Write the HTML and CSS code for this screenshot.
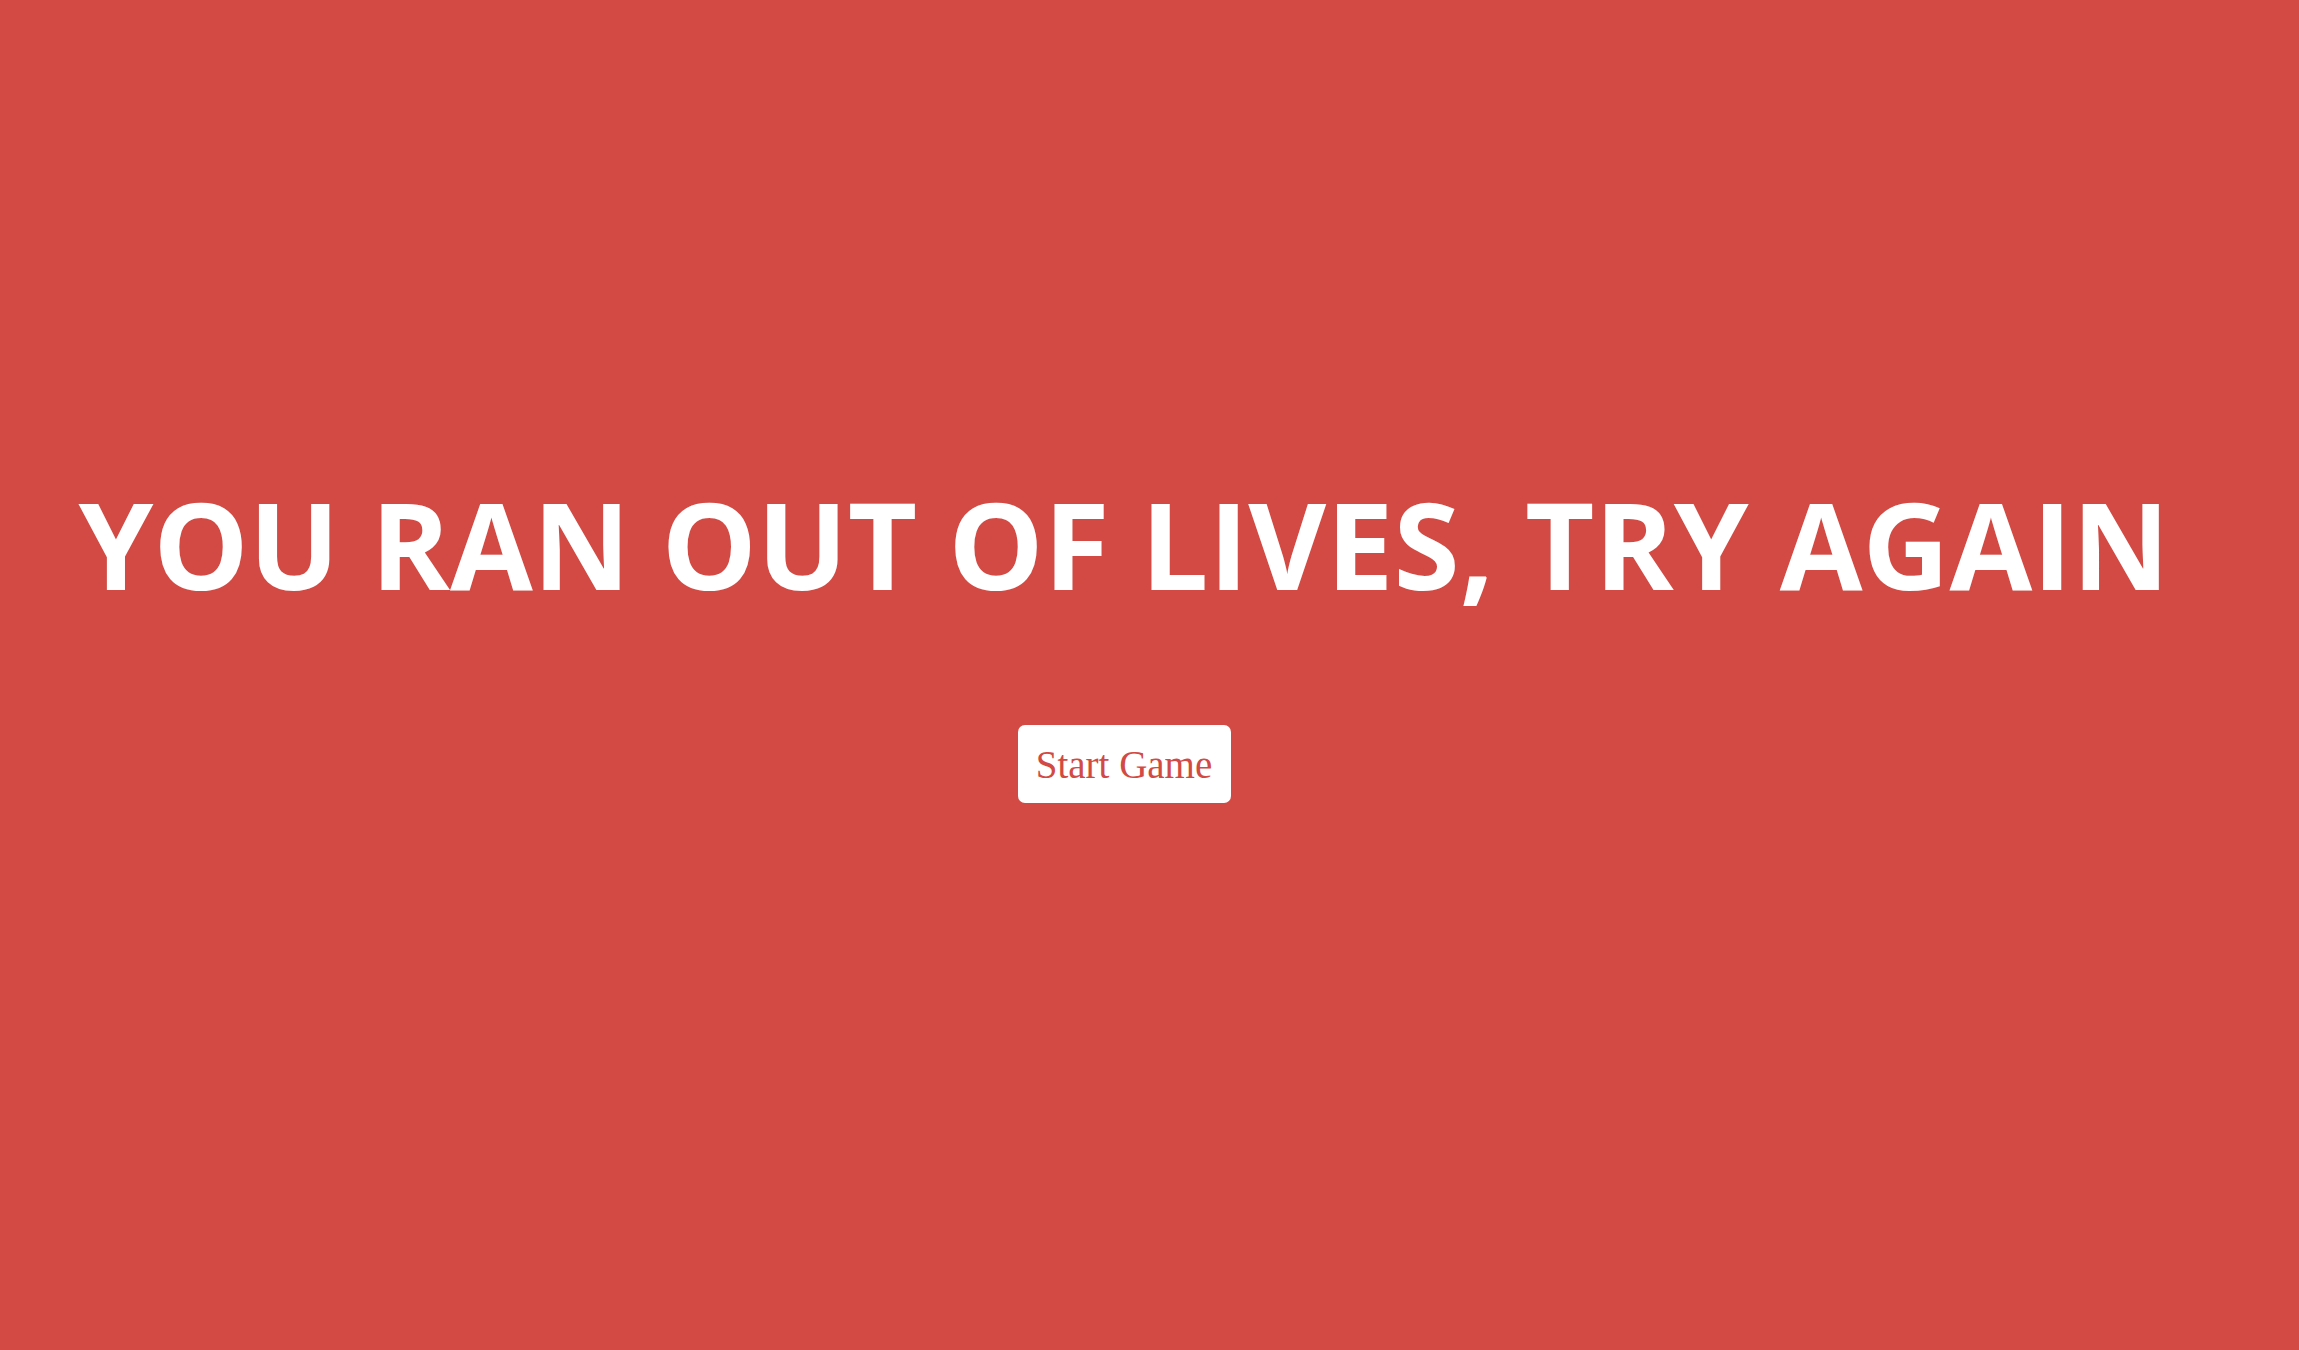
FILE: index.html
```html
<!DOCTYPE html>
<html>
<head>
<meta charset="utf-8">
<link rel="stylesheet" href="styles.css">
</head>
<body>
<main class="screen">
  <h1 class="title">YOU RAN OUT OF LIVES, TRY AGAIN</h1>
  <button class="start-btn">Start Game</button>
</main>
</body>
</html>
```
FILE: styles.css
```css
html, body {
  margin: 0;
  padding: 0;
  height: 100%;
  background: #d24a43;
}
.screen {
  width: 2248px;
  height: 1350px;
  box-sizing: border-box;
  padding-top: 462px;
  display: flex;
  flex-direction: column;
  align-items: center;
}
.title {
  margin: 0;
  font-family: "Open Sans", sans-serif;
  font-weight: 700;
  font-size: 120px;
  line-height: normal;
  color: #ffffff;
  white-space: nowrap;
}
.start-btn {
  margin-top: 100px;
  width: 213px;
  height: 78px;
  padding: 0;
  border: none;
  border-radius: 7px;
  background: #ffffff;
  color: #d24a43;
  font-family: "Liberation Serif", serif;
  font-size: 39px;
}
```
